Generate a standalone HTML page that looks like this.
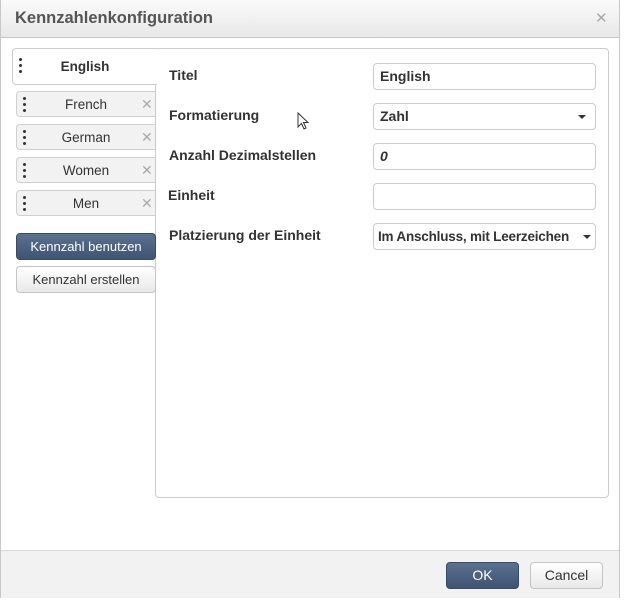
<!DOCTYPE html>
<html><head><style>
body{margin:0;width:635px;height:615px;background:#fff;font-family:"Liberation Sans",sans-serif;position:relative;overflow:hidden}
.dlg{position:absolute;left:0;top:0;width:620px;height:598px;border:1px solid #c8c8c8;border-top:none;background:#fff;box-sizing:border-box}
.hd{position:absolute;left:0;top:0;width:618px;height:37px;background:linear-gradient(#fafafa,#e8e8e8);border-bottom:1px solid #c8c8c8}
.hd span{position:absolute;left:14px;top:9px;font-size:16.5px;font-weight:bold;color:#555}
.hd i{position:absolute;left:594px;top:9px;font-style:normal;color:#aaa;font-size:15px}
.ft{position:absolute;left:0;top:550px;width:618px;height:47px;background:#f2f2f2;border-top:1px solid #d8d8d8}
.panel{position:absolute;left:154px;top:48px;width:452px;height:448px;border:1px solid #ccc;border-radius:4px;background:#fff}
.tab{position:absolute;left:15px;width:139px;height:26px;background:#f2f2f2;border:1px solid #d0d0d0;border-right:none;border-radius:4px 0 0 4px;font-size:13.5px;color:#333;text-align:center;line-height:25px;box-sizing:border-box}
.tab .x{position:absolute;left:124px;top:0;color:#aaa;font-size:14px}
.dots{position:absolute;left:6px;top:5px;width:3px}
.dots b{display:block;width:3px;height:3px;border-radius:50%;background:#333;margin-bottom:3px}
.act{left:11px;top:48px;width:145px;height:37px;background:#fff;border-color:#ccc;line-height:35px;font-weight:bold;z-index:2;border-right:none}
.lbl{position:absolute;left:168px;font-size:14px;font-weight:bold;color:#333}
.inp{position:absolute;left:372px;width:223px;height:27px;border:1px solid #ccc;border-radius:4px;box-sizing:border-box;font-size:14px;font-weight:bold;color:#333;padding-left:6px;line-height:25px;background:#fff}
.car{position:absolute;right:9px;top:11px;border-left:4px solid transparent;border-right:4px solid transparent;border-top:4px solid #333}
.btn{position:absolute;height:27px;border-radius:4px;box-sizing:border-box;font-size:14px;text-align:center;line-height:25px}
.pri{background:linear-gradient(#5b7190,#3f5373);color:#fff;border:1px solid #3a4b66}
.sec{background:linear-gradient(#fff,#e8e8e8);color:#333;border:1px solid #c4c4c4}
</style></head><body>
<div class="dlg">
<div class="hd"><span>Kennzahlenkonfiguration</span><i>✕</i></div>
<div class="panel"></div>
<div class="tab act"><div class="dots" style="top:9px"><b></b><b></b><b></b></div>English</div>
<div class="tab" style="top:91px"><div class="dots"><b></b><b></b><b></b></div>French<span class="x">✕</span></div>
<div class="tab" style="top:124px"><div class="dots"><b></b><b></b><b></b></div>German<span class="x">✕</span></div>
<div class="tab" style="top:157px"><div class="dots"><b></b><b></b><b></b></div>Women<span class="x">✕</span></div>
<div class="tab" style="top:190px"><div class="dots"><b></b><b></b><b></b></div>Men<span class="x">✕</span></div>
<div class="btn pri" style="left:15px;top:233px;width:140px;font-size:13px">Kennzahl benutzen</div>
<div class="btn sec" style="left:15px;top:266px;width:140px;font-size:13px">Kennzahl erstellen</div>
<div class="lbl" style="top:67px">Titel</div>
<div class="lbl" style="top:107px">Formatierung</div>
<div class="lbl" style="top:147px">Anzahl Dezimalstellen</div>
<div class="lbl" style="top:187px;left:167px">Einheit</div>
<div class="lbl" style="top:227px">Platzierung der Einheit</div>
<div class="inp" style="top:63px">English</div>
<div class="inp" style="top:103px">Zahl<span class="car"></span></div>
<div class="inp" style="top:143px;font-style:italic">0</div>
<div class="inp" style="top:183px"></div>
<div class="inp" style="top:223px;padding-left:4px;font-size:13.5px;letter-spacing:-0.2px">Im Anschluss, mit Leerzeichen<span class="car" style="right:4px"></span></div>
<svg style="position:absolute;left:296px;top:112px" width="13" height="20" viewBox="0 0 13 20"><path d="M1 1 L1 15 L4.5 11.5 L7 17 L9 16 L6.5 10.5 L11 10.5 Z" fill="#fff" stroke="#333" stroke-width="1"/></svg>
<div class="ft"></div>
<div class="btn pri" style="left:445px;top:562px;width:73px">OK</div>
<div class="btn sec" style="left:529px;top:562px;width:73px">Cancel</div>
</div>
</body></html>
